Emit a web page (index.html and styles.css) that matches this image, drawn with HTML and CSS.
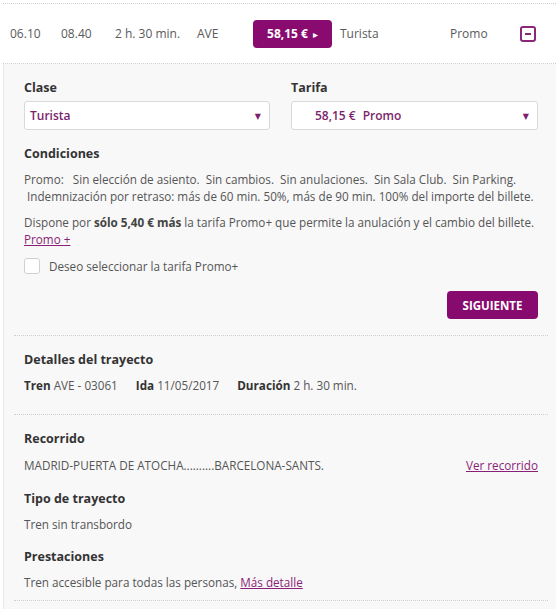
FILE: index.html
```html
<!DOCTYPE html>
<html lang="es">
<head>
<meta charset="utf-8">
<title>Trayecto</title>
<link rel="stylesheet" href="styles.css">
</head>
<body>
<div class="wrap">
  <div class="row">
    <span class="c-dep">06.10</span>
    <span class="c-arr">08.40</span>
    <span class="c-dur">2 h. 30 min.</span>
    <span class="c-type">AVE</span>
    <span class="c-price"><button class="price-btn">58,15 € <span class="tri">&#9656;</span></button></span>
    <span class="c-class">Turista</span>
    <span class="c-fare">Promo</span>
    <span class="c-toggle"><span class="minus"></span></span>
  </div>
  <div class="panel">
    <div class="selects">
      <div class="field">
        <div class="label">Clase</div>
        <div class="select"><span class="sel-text">Turista</span><span class="caret">&#9660;</span></div>
      </div>
      <div class="field">
        <div class="label">Tarifa</div>
        <div class="select"><span class="sel-text"><span class="sel-price">58,15 €</span>Promo</span><span class="caret">&#9660;</span></div>
      </div>
    </div>
    <div class="label cond-title">Condiciones</div>
    <p class="text">Promo:&nbsp;&nbsp; Sin elección de asiento.&nbsp; Sin cambios.&nbsp; Sin anulaciones.&nbsp; Sin Sala Club.&nbsp; Sin Parking.<br>&nbsp;Indemnización por retraso: más de 60 min. 50%, más de 90 min. 100% del importe del billete.</p>
    <p class="text">Dispone por <b>sólo 5,40 € más</b> la tarifa Promo+ que permite la anulación y el cambio del billete.<br><a class="link" href="#">Promo +</a></p>
    <label class="check"><span class="box"></span>Deseo seleccionar la tarifa Promo+</label>
    <div class="actions"><button class="next-btn">SIGUIENTE</button></div>
    <div class="details">
      <section class="sec">
        <h3 class="sec-title">Detalles del trayecto</h3>
        <p class="sec-text"><b>Tren</b> AVE - 03061<span class="sp"></span><b>Ida</b> 11/05/2017<span class="sp"></span><b>Duración</b> 2 h. 30 min.</p>
      </section>
      <section class="sec sec2">
        <h3 class="sec-title">Recorrido</h3>
        <p class="sec-text route"><span>MADRID-PUERTA DE ATOCHA..........BARCELONA-SANTS.</span><a class="link" href="#">Ver recorrido</a></p>
        <h3 class="sec-title sub">Tipo de trayecto</h3>
        <p class="sec-text">Tren sin transbordo</p>
        <h3 class="sec-title sub">Prestaciones</h3>
        <p class="sec-text">Tren accesible para todas las personas, <a class="link" href="#">Más detalle</a></p>
      </section>
    </div>
  </div>
</div>
</body>
</html>
```
FILE: styles.css
```css
* { box-sizing: border-box; }
html, body { margin: 0; padding: 0; background: #fff; }
body {
  font-family: "Open Sans", "DejaVu Sans", sans-serif;
  color: #555;
  font-size: 12px;
}
.wrap {
  margin: 3px 3px 0 3px;
}
.row {
  display: grid;
  grid-template-columns: 51px 54px 82px 56px 85px 112px 70px 1fr;
  align-items: center;
  height: 61px;
  padding-left: 7px;
  border-top: 1px dotted #cfcfcf;
  border-bottom: 1px dotted #cfcfcf;
  font-size: 12px;
  color: #5a5a5a;
}
.price-btn {
  display: inline-flex;
  align-items: center;
  justify-content: center;
  gap: 4px;
  width: 79px;
  height: 28px;
  border: 0;
  border-radius: 4px;
  background: #890b70;
  color: #fff;
  font-family: inherit;
  font-size: 12px;
  font-weight: 700;
  padding: 0;
}
.tri { font-size: 10px; margin-left: 1px; }
.c-class { padding-left: 2px; }
.c-toggle { display: flex; }
.minus {
  position: relative;
  width: 16px;
  height: 16px;
  border: 2px solid #8a2877;
  border-radius: 3px;
}
.minus::after {
  content: "";
  position: absolute;
  left: 3px;
  right: 3px;
  top: 5px;
  height: 2px;
  background: #8a2877;
}
.panel {
  background: #f8f8f8;
  border-left: 1px solid #e8e8e8;
  padding: 15px 18px 8px 20px;
}
.selects {
  display: grid;
  grid-template-columns: 246px 247px;
  column-gap: 21px;
}
.label {
  font-size: 12.5px;
  font-weight: 700;
  color: #333;
  line-height: 17px;
  margin-bottom: 5px;
}
.select {
  display: flex;
  align-items: center;
  justify-content: space-between;
  height: 29px;
  background: #fff;
  border: 1px solid #d9d9d9;
  border-radius: 3px;
  padding: 0 8px 0 5px;
  color: #7c1f6c;
  font-weight: 600;
  font-size: 12px;
}
.sel-price { margin: 0 7px 0 18px; font-weight: 600; }
.caret { font-size: 8px; color: #7c1f6c; }
.cond-title { margin-top: 15px; margin-bottom: 9px; }
.text {
  margin: 0 0 9px 0;
  line-height: 17px;
  font-size: 11.7px;
  color: #555;
}
.text b { color: #444; font-weight: 700; }
.link { color: #8a1f77; text-decoration: underline; }
.check {
  display: flex;
  align-items: center;
  gap: 9px;
  margin-top: 10px;
  font-size: 11.7px;
  color: #555;
}
.box {
  width: 16px;
  height: 16px;
  background: #fff;
  border: 1px solid #d0d0d0;
  border-radius: 3px;
}
.actions {
  display: flex;
  justify-content: flex-end;
  margin-top: 17px;
}
.next-btn {
  width: 91px;
  height: 28px;
  border: 0;
  border-radius: 4px;
  background: #870a6f;
  color: #fff;
  font-family: inherit;
  font-weight: 700;
  font-size: 11.5px;
  padding: 0;
}
.details {
  margin: 16px -10px 0 -10px;
}
.sec {
  border-top: 1px dotted #cfcfcf;
  padding: 15px 10px 20px 10px;
}
.sec2 {
  border-bottom: 1px dotted #cfcfcf;
  padding-bottom: 9px;
}
.sec-title {
  margin: 0 0 9px 0;
  font-size: 12.5px;
  font-weight: 700;
  color: #333;
  line-height: 17px;
}
.sec-title.sub { margin-top: 15px; }
.sec-text {
  margin: 0;
  line-height: 17px;
  font-size: 11.7px;
  color: #555;
}
.sec-text b { color: #333; }
.sp { display: inline-block; width: 18px; }
.route {
  display: flex;
  justify-content: space-between;
  line-height: 19px;
}
```
